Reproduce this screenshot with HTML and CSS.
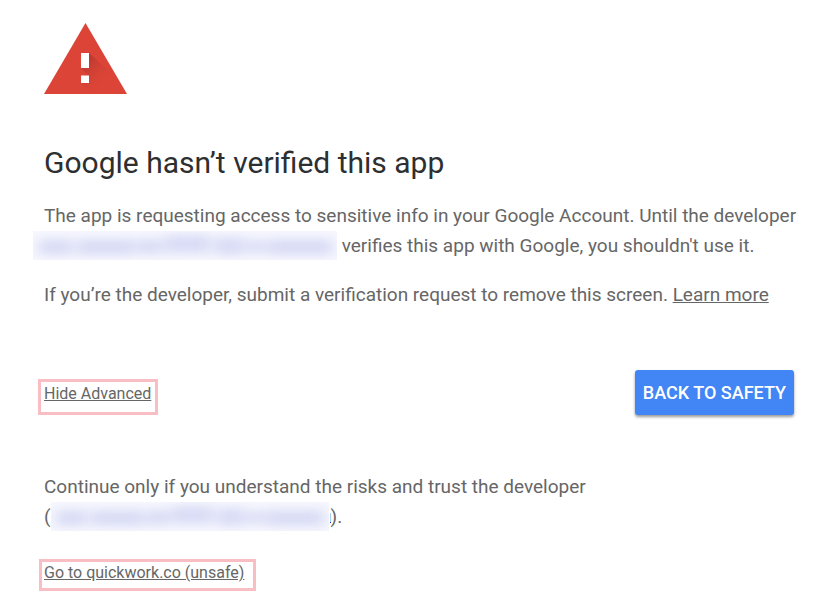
FILE: index.html
```
<!DOCTYPE html>
<html lang="en">
<head>
  <meta charset="UTF-8">
  <meta name="viewport" content="width=device-width, initial-scale=1.0">
  <title>Google hasn’t verified this app</title>
  <link rel="stylesheet" href="styles.css">
</head>
<body>
  <svg class="defs" aria-hidden="true">
    <defs>
      <filter id="soften" x="-10%" y="-80%" width="120%" height="260%" color-interpolation-filters="sRGB">
        <feGaussianBlur stdDeviation="7 5"/>
      </filter>
      <symbol id="smudge" viewBox="0 0 304 29" preserveAspectRatio="none">
        <rect width="304" height="29" fill="#f6f7fe"/>
        <g fill="#d9dcf5" filter="url(#soften)">
          <rect x="6" y="8" width="33" height="16"/>
          <rect x="44" y="8" width="58" height="16"/>
          <rect x="105" y="8" width="24" height="15"/>
          <rect x="132" y="4" width="45" height="18"/>
          <rect x="182" y="6" width="29" height="18"/>
          <rect x="214" y="9" width="17" height="13"/>
          <rect x="234" y="8" width="65" height="16"/>
        </g>
      </symbol>
    </defs>
  </svg>

  <main class="warning">
    <svg class="warning-icon" viewBox="0 0 84 72" aria-hidden="true">
      <defs>
        <linearGradient id="shade" gradientUnits="userSpaceOnUse" x1="40" y1="40" x2="60" y2="60">
          <stop offset="0" stop-color="#a8322a" stop-opacity="0.6"/>
          <stop offset="1" stop-color="#db4437" stop-opacity="0"/>
        </linearGradient>
      </defs>
      <path fill="#db4437" d="M41.500 0L83 71H0z"/>
      <path fill="url(#shade)" d="M45 30L74 57L82 71H48L37 60L45 60V53L37 45H45z"/>
      <path fill="#fff" d="M37 30h8v15h-8zM37 52.500h8v7.500h-8z"/>
    </svg>

    <h1>Google hasn’t verified this app</h1>
    <p>The app is requesting access to sensitive info in your Google Account. Until the developer
      <svg class="redacted redacted-outdent" role="img" aria-label="Hidden developer"><use href="#smudge"/></svg>
      verifies this app with Google, you shouldn't use it.</p>
    <p>If you’re the developer, submit a verification request to remove this screen. <a href="#">Learn more</a></p>

    <div class="actions">
      <a href="#advanced" class="marked marked-toggle">Hide Advanced</a>
      <button type="button" class="btn-safety">BACK TO SAFETY</button>
    </div>

    <section class="advanced" id="advanced">
      <p>Continue only if you understand the risks and trust the developer<br>
        (<svg class="redacted redacted-short" role="img" aria-label="Hidden developer"><use href="#smudge"/></svg><a href="#" class="developer-end" aria-label="Developer"></a>).</p>
      <a href="#" class="marked">Go to quickwork.co (unsafe)</a>
    </section>
  </main>
</body>
</html>
```
FILE: styles.css
```
:root {
  --text-color: #666;
  --heading-color: #2d2f31;
  --primary-color: #4285f4;
  --mark-color: #f9bec3;
}

* {
  box-sizing: border-box;
}

body {
  margin: 0;
  background-color: #fff;
  color: var(--text-color);
  font-family: Roboto, "Liberation Sans", sans-serif;
  font-size: 19px;
  line-height: 30px;
}

.defs {
  position: absolute;
  width: 0;
  height: 0;
}

.warning {
  padding: 23px 16px 18px 44px;
}

.warning-icon {
  display: block;
  width: 84px;
  height: 72px;
}

h1 {
  margin: 48px 0 18px;
  color: var(--heading-color);
  font-size: 30px;
  font-weight: 400;
  line-height: 40px;
}

p {
  margin: 0 0 19px;
}

a {
  color: inherit;
  text-decoration: underline;
}

.redacted {
  display: inline-block;
  width: 304px;
  height: 29px;
  vertical-align: -8px;
}

.redacted-outdent {
  margin-left: -11px;
}

.redacted-short {
  width: 278px;
}

.developer-end {
  display: inline-block;
  width: 1px;
  height: 10px;
  margin-left: 1px;
  background-color: #a9cdf0;
  border-bottom: 1px solid #1a2bc4;
}

.actions {
  display: flex;
  align-items: flex-end;
  justify-content: space-between;
  margin-top: 60px;
  padding-right: 8px;
}

.marked {
  display: inline-block;
  margin-left: -5px;
  padding: 0 9px 5px 2px;
  border: 3px solid var(--mark-color);
  font-size: 16px;
  line-height: 21px;
}

.marked-toggle {
  margin-left: -6px;
  padding: 1px 4px 8px 3px;
}

.btn-safety {
  height: 45px;
  padding: 0 8px;
  border: none;
  border-radius: 3px;
  background-color: var(--primary-color);
  color: #fff;
  font-family: inherit;
  font-size: 18px;
  font-weight: 500;
  cursor: pointer;
  box-shadow: 0 2px 3px rgba(0, 0, 0, 0.4);
}

.advanced {
  margin-top: 57px;
}

.advanced p {
  margin-bottom: 25px;
}
```
